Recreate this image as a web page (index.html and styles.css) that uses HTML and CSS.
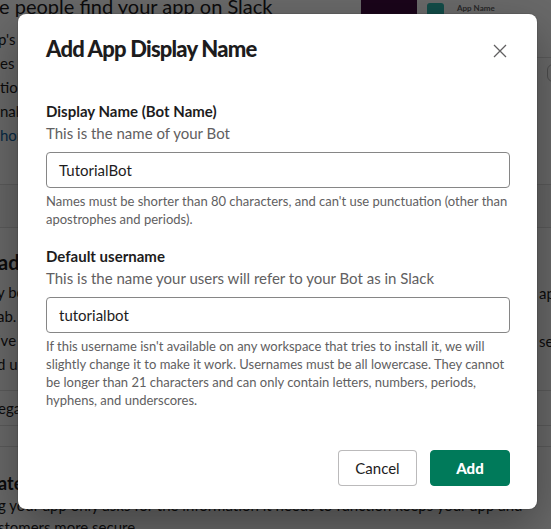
FILE: index.html
```html
<!DOCTYPE html>
<html lang="en">
<head>
<meta charset="utf-8">
<title>Add App Display Name</title>
<link rel="stylesheet" href="styles.css">
</head>
<body>
<div class="screen">
  <div class="bg">
    <div class="bg-top">
      <div class="bg-main">
        <h1 class="bg-h1">e people find your app on Slack</h1>
        <p class="bg-lines">
          <span class="bl">p's display name and icon</span>
          <span class="bl">es and shortcuts</span>
          <span class="bl">tion about your app</span>
          <span class="bl">nal details</span>
          <span class="bl link">hor more</span>
        </p>
      </div>
      <div class="preview">
        <div class="pv-card">
          <div class="pv-side"></div>
          <div class="pv-msg"><span class="pv-icon"></span><span class="pv-name">App Name</span></div>
        </div>
        <div class="pv-line"></div>
        <div class="pv-pill"></div>
      </div>
    </div>
    <div class="bg-band"></div>
    <section class="bg-sec">
      <h2 class="bg-h2">ad</h2>
      <p class="bg-para">
        <span class="bl">y bots and features to your app</span>
        <span class="bl">ab.</span>
        <span class="bl">ive your app the permissions it needs</span>
        <span class="bl">d u</span>
      </p>
      <div class="bg-rows">
        <div class="bg-row">ega</div>
        <div class="bg-row short"></div>
      </div>
      <h3 class="bg-h3">ate</h3>
      <p class="bg-foot">
        <span class="bl">g your app only asks for the information it needs to function keeps your app and</span>
        <span class="bl">stomers more secure.</span>
      </p>
    </section>
    <span class="bg-r1">ap</span>
    <span class="bg-r2">se</span>
  </div>
  <div class="overlay"></div>

  <div class="modal" role="dialog" aria-labelledby="mtitle">
    <div class="m-head">
      <h1 class="m-title" id="mtitle">Add App Display Name</h1>
      <button class="m-close" aria-label="Close">
        <svg width="14" height="14" viewBox="0 0 14 14"><path d="M1 1L13 13M13 1L1 13" stroke="#616061" stroke-width="1.3" fill="none"/></svg>
      </button>
    </div>
    <div class="m-body">
      <div class="field">
        <div class="f-label">Display Name (Bot Name)</div>
        <div class="f-desc">This is the name of your Bot</div>
        <div class="f-input">TutorialBot</div>
        <div class="f-help">Names must be shorter than 80 characters, and can't use punctuation (other than apostrophes and periods).</div>
      </div>
      <div class="field">
        <div class="f-label">Default username</div>
        <div class="f-desc">This is the name your users will refer to your Bot as in Slack</div>
        <div class="f-input">tutorialbot</div>
        <div class="f-help">If this username isn't available on any workspace that tries to install it, we will slightly change it to make it work. Usernames must be all lowercase. They cannot be longer than 21 characters and can only contain letters, numbers, periods, hyphens, and underscores.</div>
      </div>
    </div>
    <div class="m-foot">
      <button class="btn btn-cancel">Cancel</button>
      <button class="btn btn-add">Add</button>
    </div>
  </div>
</div>
</body>
</html>
```
FILE: styles.css
```css
* { box-sizing: border-box; }
html, body { margin: 0; padding: 0; }
body {
  font-family: Lato, "Noto Sans", "Liberation Sans", sans-serif;
  color: #1d1c1d;
  background: #fff;
  overflow: hidden;
}
.screen {
  position: relative;
  width: 551px;
  height: 529px;
  overflow: hidden;
}

/* ---------- background page ---------- */
.bg {
  position: relative;
  width: 551px;
  height: 529px;
  background: #fff;
}
.bg-top {
  display: grid;
  grid-template-columns: 361px 1fr;
  height: 185px;
  border-bottom: 1px solid #ddd;
}
.bg-h1 {
  margin: -8px 0 0 -1px;
  font-size: 20px;
  line-height: 28px;
  font-weight: 400;
  white-space: nowrap;
}
.bg-lines {
  margin: 7px 0 0 0;
  font-size: 15px;
  line-height: 24px;
  color: #1d1c1d;
}
.bl { display: block; white-space: nowrap; }
.bg-lines .bl:first-child { margin-left: -2px; }
.link { color: #1264a3; }
.preview { position: relative; }
.pv-card {
  display: flex;
  height: 14px;
}
.pv-side { width: 56px; background: #3f0e40; }
.pv-msg { display: flex; align-items: flex-start; padding: 3px 0 0 10px; gap: 13px; }
.pv-icon { width: 17px; height: 17px; border-radius: 3px; background: #2fb8b0; }
.pv-name { font-size: 8px; line-height: 10px; color: #616061; font-weight: 700; }
.pv-line { margin: 43px 0 0 0; height: 1px; background: #ddd; }
.pv-pill {
  margin: 6px 0 0 186px;
  width: 60px;
  height: 18px;
  border: 1px solid #bbb;
  border-radius: 6px;
}
.bg-band {
  height: 43px;
  background: #f8f8f8;
  border-bottom: 1px solid #ddd;
}
.bg-h2 {
  margin: 20px 0 0 -2px;
  font-size: 20px;
  line-height: 28px;
  font-weight: 700;
}
.bg-para {
  margin: 4px 0 0 -3px;
  font-size: 15px;
  line-height: 24px;
}
.bg-rows { margin-top: 14px; border-top: 1px solid #ddd; }
.bg-row {
  height: 35px;
  line-height: 35px;
  font-size: 15px;
  border-bottom: 1px solid #ddd;
  margin-left: -2px;
}
.bg-row.short { height: 21px; }
.bg-h3 {
  margin: 23px 0 0 -2px;
  font-size: 18px;
  line-height: 26px;
  font-weight: 700;
}
.bg-foot {
  margin: -2px 0 0 -2px;
  font-size: 15px;
  line-height: 22px;
}
.bg-r1, .bg-r2 {
  position: absolute;
  left: 539px;
  font-size: 15px;
  line-height: 24px;
}
.bg-r1 { top: 281px; }
.bg-r2 { top: 329px; }

.overlay {
  position: absolute;
  inset: 0;
  background: rgba(0, 0, 0, 0.59);
}

/* ---------- modal ---------- */
.modal {
  position: absolute;
  left: 18px;
  top: 14px;
  width: 519px;
  height: 495px;
  background: #fff;
  border-radius: 8px;
  box-shadow: 0 0 0 1px rgba(29, 28, 29, 0.13), 0 18px 48px 0 rgba(0, 0, 0, 0.35);
  display: flex;
  flex-direction: column;
}
.m-head {
  height: 70px;
  flex-shrink: 0;
  display: flex;
  align-items: center;
  justify-content: space-between;
  padding: 0 19px 0 28px;
}
.m-title {
  margin: 0;
  font-size: 22px;
  line-height: 30px;
  font-weight: 900;
  letter-spacing: -0.8px;
  color: #1d1c1d;
}
.m-close {
  width: 36px;
  height: 36px;
  margin-top: 4px;
  border: 0;
  background: transparent;
  padding: 0;
  display: flex;
  align-items: center;
  justify-content: center;
}
.m-body {
  padding: 16px 27px 0 28px;
}
.field + .field { margin-top: 17px; }
.f-label {
  font-size: 15px;
  line-height: 22px;
  font-weight: 700;
  color: #1d1c1d;
}
.f-desc {
  font-size: 15px;
  line-height: 22px;
  color: #616061;
}
.f-input {
  margin-top: 8px;
  height: 36px;
  border: 1px solid #868686;
  border-radius: 4px;
  padding: 0 12px;
  font-size: 15px;
  line-height: 34px;
  color: #1d1c1d;
}
.f-help {
  margin-top: 4px;
  font-size: 13px;
  line-height: 18px;
  color: #616061;
}
.m-foot {
  margin-top: auto;
  display: flex;
  justify-content: flex-end;
  gap: 13px;
  padding: 0 27px 23px 28px;
}
.btn {
  min-width: 80px;
  height: 36px;
  padding: 0 12px;
  border-radius: 4px;
  font-family: inherit;
  font-size: 15px;
}
.btn-cancel {
  background: #fff;
  color: #1d1c1d;
  font-weight: 400;
  min-width: 79px;
  border: 1px solid rgba(29, 28, 29, 0.3);
}
.btn-add {
  background: #007a5a;
  color: #fff;
  font-weight: 900;
  border: 1px solid #007a5a;
}
```
